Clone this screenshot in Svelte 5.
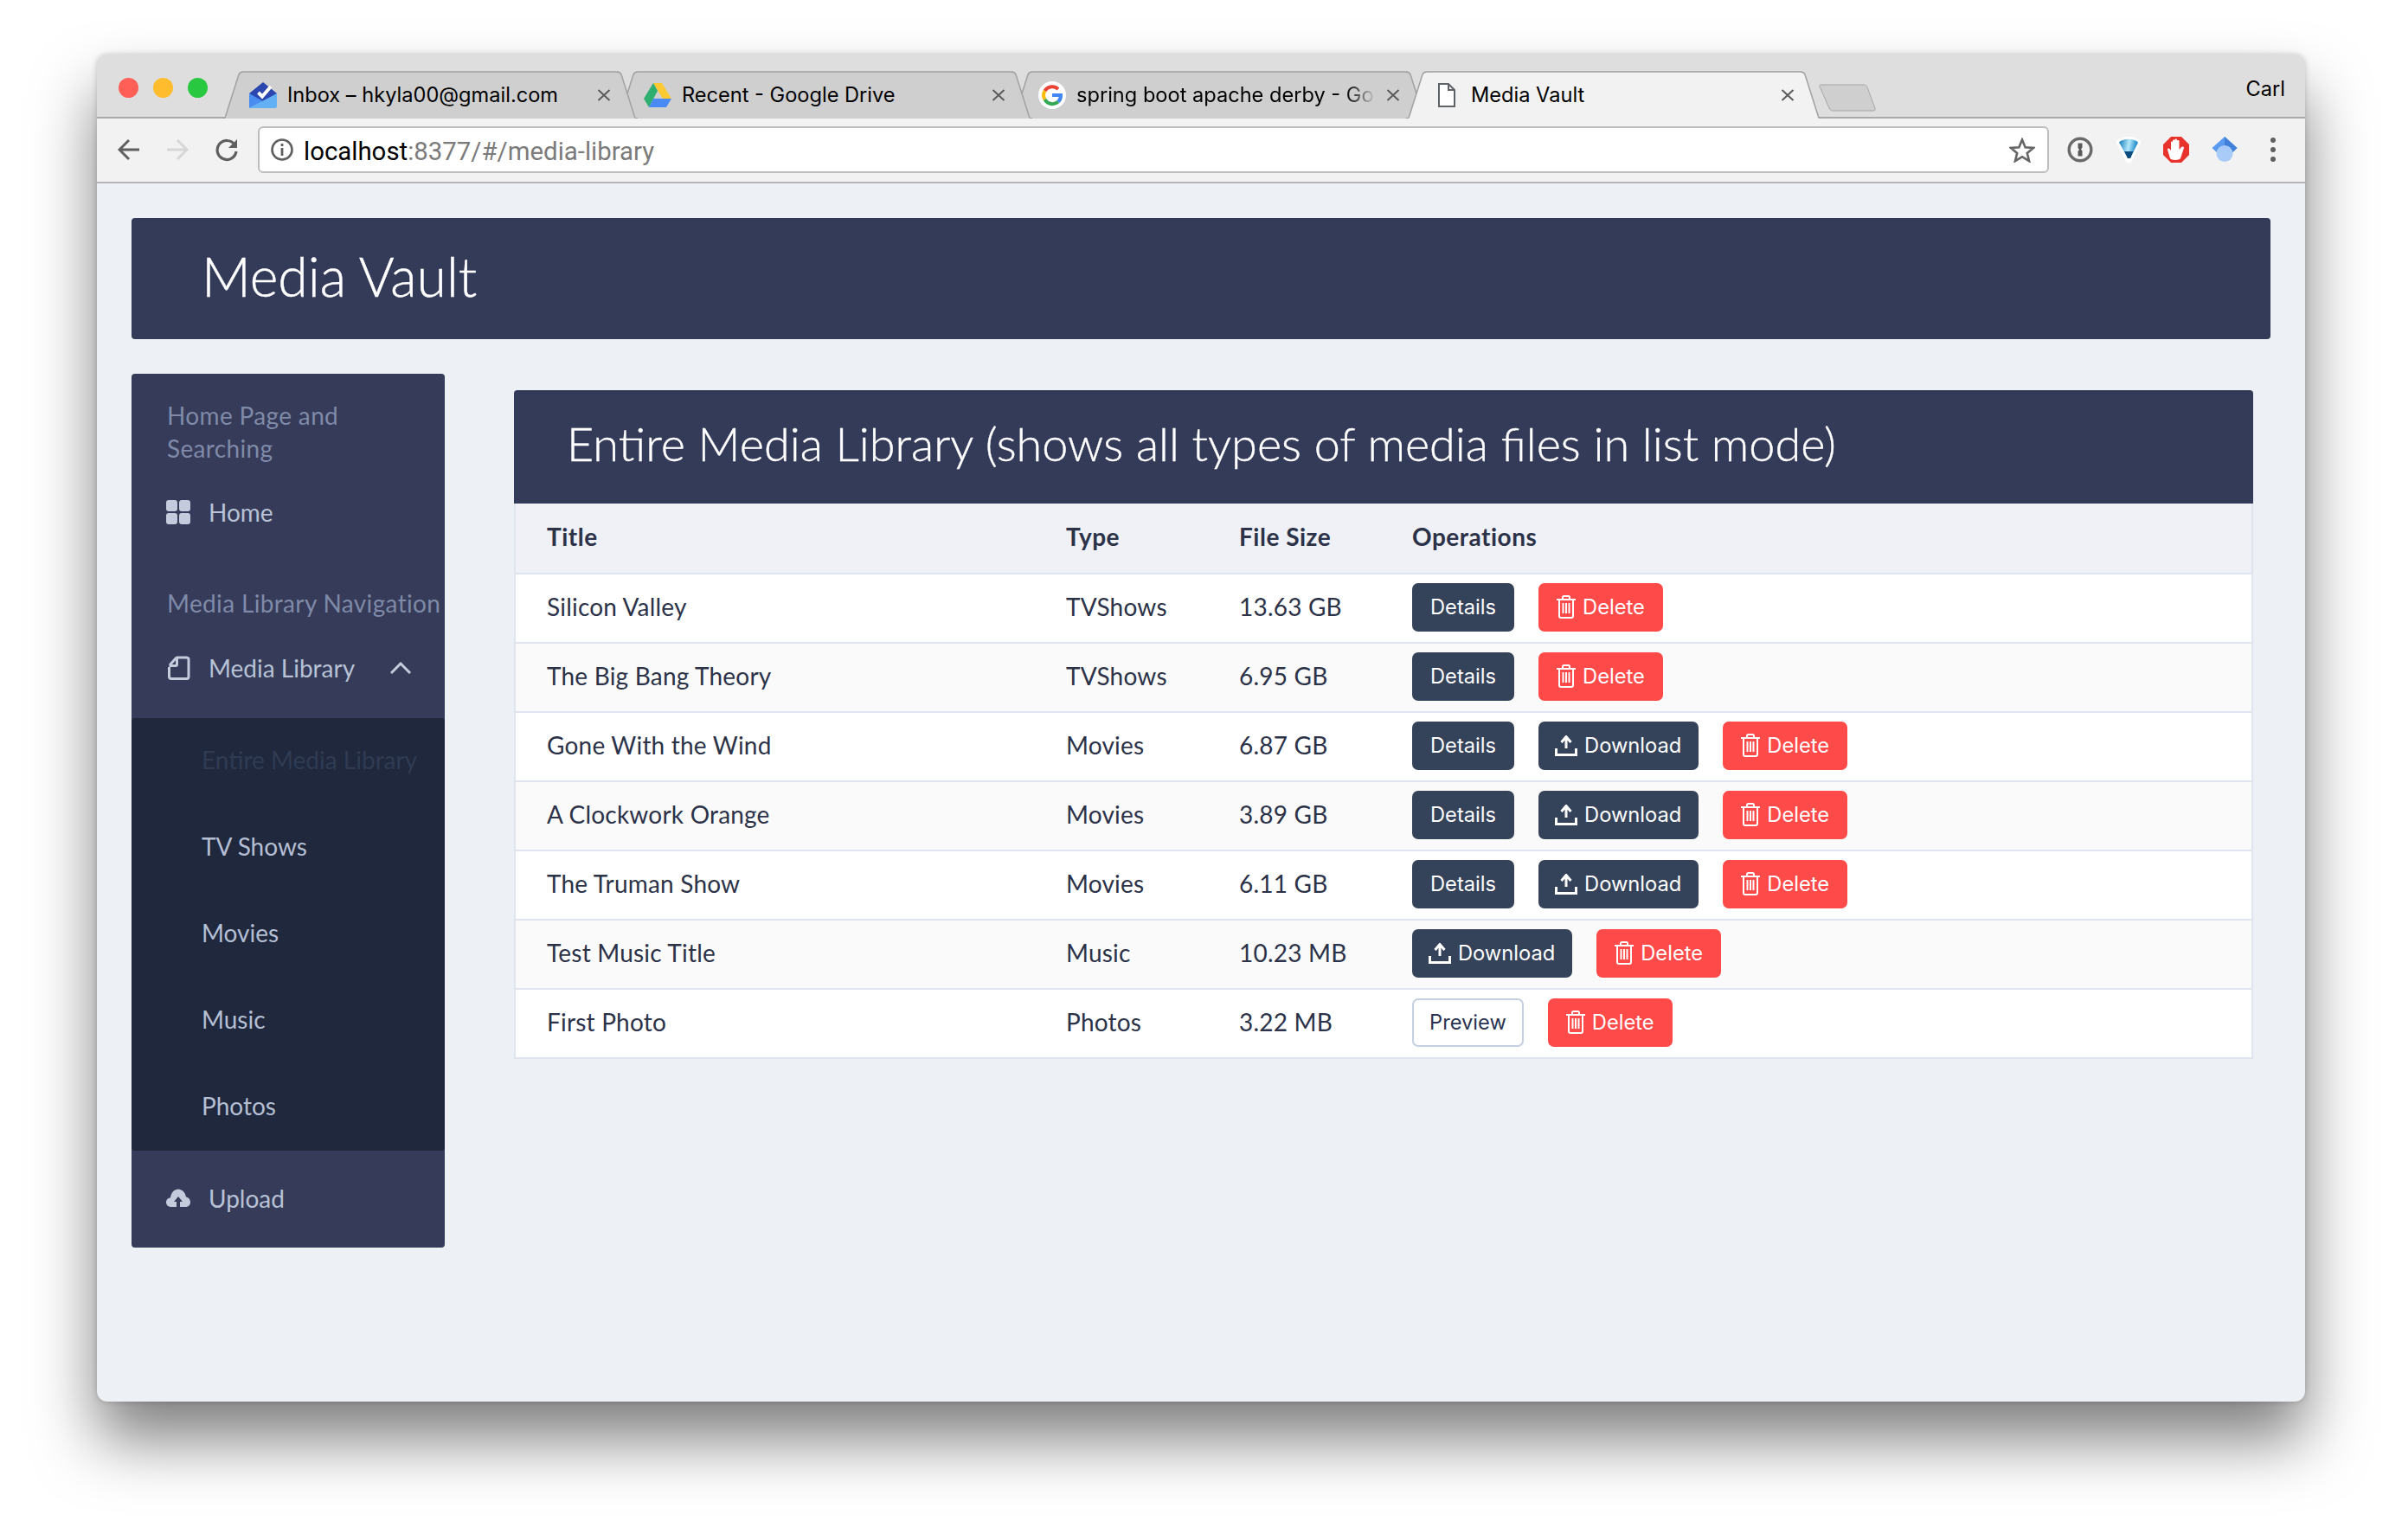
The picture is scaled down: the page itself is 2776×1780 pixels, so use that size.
<script>
  const tabs = [
    { title: 'Inbox – hkyla00@gmail.com', icon: 'inbox' },
    { title: 'Recent - Google Drive', icon: 'drive' },
    { title: 'spring boot apache derby - Go', icon: 'google', fade: true },
    { title: 'Media Vault', icon: 'doc', active: true }
  ];

  const subItems = ['Entire Media Library', 'TV Shows', 'Movies', 'Music', 'Photos'];

  // ops: which buttons each row gets
  const rows = [
    { title: 'Silicon Valley', type: 'TVShows', size: '13.63 GB', ops: ['details', 'delete'] },
    { title: 'The Big Bang Theory', type: 'TVShows', size: '6.95 GB', ops: ['details', 'delete'] },
    { title: 'Gone With the Wind', type: 'Movies', size: '6.87 GB', ops: ['details', 'download', 'delete'] },
    { title: 'A Clockwork Orange', type: 'Movies', size: '3.89 GB', ops: ['details', 'download', 'delete'] },
    { title: 'The Truman Show', type: 'Movies', size: '6.11 GB', ops: ['details', 'download', 'delete'] },
    { title: 'Test Music Title', type: 'Music', size: '10.23 MB', ops: ['download', 'delete'] },
    { title: 'First Photo', type: 'Photos', size: '3.22 MB', ops: ['preview', 'delete'] }
  ];
</script>

<div class="page">
  <div class="window">
    <div class="tabstrip">
      <div class="lights">
        <span class="light red"></span>
        <span class="light amber"></span>
        <span class="light green"></span>
      </div>
      <div class="tabs">
        {#each tabs as tab}
          <div class="tab" class:active={tab.active}>
            <svg class="tab-shape" viewBox="0 0 482 55" preserveAspectRatio="none">
              <path d="M0.5 55 L2 55 C3 55 4 54 4.5 53 L20 4 C21 2 22 1 25 1 L457 1 C460 1 461 2 462 4 L477.5 53 C478 54 479 55 480 55 L481.5 55" />
            </svg>
            <span class="favicon">
              {#if tab.icon === 'inbox'}
                <svg width="32" height="30" viewBox="0 0 32 30">
                  <path d="M0 13 L16 0 L32 13 L16 25 Z" fill="#2c46b0" />
                  <path d="M0 13 L16 22 L0 30 Z" fill="#4a8df0" />
                  <path d="M0 30 L32 13 V28 C32 29 31 30 30 30 Z" fill="#64b0f5" />
                  <path d="M10.5 12 L15 16.5 L25 5" fill="none" stroke="#fff" stroke-width="4" />
                </svg>
              {:else if tab.icon === 'drive'}
                <svg width="32" height="28" viewBox="0 0 32 28">
                  <path d="M11 0 H21 L32 18 H22 Z" fill="#fbc932" />
                  <path d="M11 0 L16 9 L6 28 L0 18 Z" fill="#2eaf6f" />
                  <path d="M11 18 H32 L26 28 H6 Z" fill="#4a8af4" />
                </svg>
              {:else if tab.icon === 'google'}
                <svg width="32" height="32" viewBox="0 0 32 32">
                  <circle cx="16" cy="16" r="16" fill="#fff" />
                  <path d="M23 9 A10 10 0 0 0 7.5 11" fill="none" stroke="#ea4335" stroke-width="4" />
                  <path d="M7.5 11 A10 10 0 0 0 7.5 21" fill="none" stroke="#fbbc05" stroke-width="4" />
                  <path d="M7.5 21 A10 10 0 0 0 23 23.5" fill="none" stroke="#34a853" stroke-width="4" />
                  <path d="M23 23.5 A10 10 0 0 0 26 16 H16" fill="none" stroke="#4285f4" stroke-width="4" />
                </svg>
              {:else}
                <svg width="20" height="28" viewBox="0 0 20 28">
                  <path d="M1 1 H12 L19 8 V27 H1 Z M12 1 V8 H19" fill="#fff" stroke="#5f6368" stroke-width="2" />
                </svg>
              {/if}
            </span>
            <span class="tab-title" class:fade={tab.fade}>{tab.title}</span>
            <svg class="tab-close" width="16" height="14" viewBox="0 0 16 14">
              <path d="M1.5 1 L14.5 13 M14.5 1 L1.5 13" stroke="#5a5a5a" stroke-width="2" />
            </svg>
          </div>
        {/each}
        <svg class="newtab" width="66" height="32" viewBox="0 0 66 32">
          <path d="M2 1 H52 C54 1 55 2 56 4 L65 28 C65.5 30 65 31 63 31 H16 C14 31 13 30 12 28 L1 3 C0.5 2 1 1 2 1 Z" fill="#cfcfcf" stroke="#a6a6a6" />
        </svg>
      </div>
      <span class="profile">Carl</span>
    </div>

    <div class="toolbar">
      <svg class="nav-icon" width="26" height="26" viewBox="0 0 26 26">
        <path d="M25 13 H3 M13 2 L2 13 L13 24" fill="none" stroke="#5f5f5f" stroke-width="3" />
      </svg>
      <svg class="nav-icon" width="26" height="26" viewBox="0 0 26 26">
        <path d="M1 13 H23 M13 2 L24 13 L13 24" fill="none" stroke="#d6d6d6" stroke-width="3" />
      </svg>
      <svg class="nav-icon" width="28" height="28" viewBox="0 0 28 28">
        <path d="M23 8 A11 11 0 1 0 25 16" fill="none" stroke="#5f5f5f" stroke-width="3.2" />
        <path d="M26 2 V12 H16 Z" fill="#5f5f5f" />
      </svg>
      <div class="omnibox">
        <svg width="26" height="26" viewBox="0 0 26 26">
          <circle cx="13" cy="13" r="11.5" fill="none" stroke="#5f5f5f" stroke-width="2.6" />
          <rect x="11.6" y="11" width="2.8" height="9" fill="#5f5f5f" />
          <rect x="11.6" y="6" width="2.8" height="3" fill="#5f5f5f" />
        </svg>
        <span class="url"><span class="host">localhost</span>:8377/#/media-library</span>
        <svg class="star" width="30" height="29" viewBox="0 0 30 29">
          <path d="M15 2.5 L18.6 11.2 L28 11.9 L20.8 18 L23.1 27.2 L15 22.2 L6.9 27.2 L9.2 18 L2 11.9 L11.4 11.2 Z" fill="none" stroke="#666" stroke-width="2.6" />
        </svg>
      </div>
      <div class="extensions">
        <svg width="30" height="30" viewBox="0 0 30 30">
          <circle cx="15" cy="15" r="12.8" fill="#f4f4f4" stroke="#6a6a6a" stroke-width="3.4" />
          <path d="M12.5 7.5 H17.5 V12.5 L16 14.5 L17.5 16.5 V22.5 H12.5 V17 L14 15 L12.5 13 Z" fill="#5a5a5a" />
        </svg>
        <svg width="30" height="32" viewBox="0 0 30 32">
          <defs>
            <linearGradient id="funnel" x1="0" y1="0" x2="1" y2="0.2">
              <stop offset="0" stop-color="#0a76b8" />
              <stop offset="0.55" stop-color="#b5e8fa" />
              <stop offset="1" stop-color="#0a7fc4" />
            </linearGradient>
          </defs>
          <path d="M0.5 7 C6 -1 24 -1 29.5 7 L19 29 C17.5 32 13 32 11.5 29 Z" fill="#fff" />
          <path d="M4 7.5 C9 2.5 21 2.5 26 7.5 L17 26 H14 Z" fill="url(#funnel)" />
          <path d="M10 18 H20.5 L17 26 H14 Z" fill="#0c4a80" />
        </svg>
        <svg width="30" height="30" viewBox="0 0 30 30">
          <path d="M9 0 H21 L30 9 V21 L21 30 H9 L0 21 V9 Z" fill="#e8322c" />
          <path d="M8 25 L5 15 C4.5 13.5 6.5 12.8 7.5 14 L9 16 V6.5 C9 5 11 5 11 6.5 V4.5 C11 3 13.5 3 13.5 4.5 V3.5 C13.5 2 16 2 16 3.5 V5 C16 3.8 18.5 3.8 18.5 5 V15 L21 12 C22 10.8 24.5 11.5 24 13 L20 25 C19 27.5 9 27.5 8 25 Z" fill="#fff" />
        </svg>
        <svg width="30" height="30" viewBox="0 0 30 30">
          <path d="M15 0 L29.5 13 L21 21 H9 L0.5 13 Z" fill="#5a9bf0" />
          <path d="M15 0 L29.5 13 L21 21 L15 15 Z" fill="#4180d8" />
          <circle cx="15" cy="19.5" r="9.5" fill="#a9cbf8" />
        </svg>
        <svg class="dots" width="6" height="28" viewBox="0 0 6 28">
          <circle cx="3" cy="3" r="3" fill="#5f5f5f" />
          <circle cx="3" cy="14" r="3" fill="#5f5f5f" />
          <circle cx="3" cy="25" r="3" fill="#5f5f5f" />
        </svg>
      </div>
    </div>

    <div class="content">
      <header class="app-header">Media Vault</header>

      <div class="columns">
        <nav class="sidebar">
          <div class="nav-label first">Home Page and Searching</div>
          <div class="nav-item home">
            <svg width="28" height="28" viewBox="0 0 28 28">
              <rect width="13" height="13" rx="3" fill="#c3cbdc" />
              <rect x="15" width="13" height="13" rx="3" fill="#c3cbdc" />
              <rect y="15" width="13" height="13" rx="3" fill="#c3cbdc" />
              <rect x="15" y="15" width="13" height="13" rx="3" fill="#c3cbdc" />
            </svg>
            Home
          </div>
          <div class="nav-label second">Media Library Navigation</div>
          <div class="nav-item library">
            <svg width="28" height="28" viewBox="0 0 28 28">
              <path d="M4 11 L11 3 C11.5 2.5 12 2 13 2 H23 C25 2 26 3 26 4 V24 C26 25.5 25 26.5 24 26.5 H6 C4.5 26.5 3.5 25.5 3.5 24 V13 M3.5 11.5 H11 C12 11.5 12.5 11 12.5 10 V2" fill="none" stroke="#c3cbdc" stroke-width="3" />
            </svg>
            Media Library
            <svg class="chevron" width="24" height="14" viewBox="0 0 24 14">
              <path d="M1 13 L12 2 L23 13" fill="none" stroke="#c3cbdc" stroke-width="3" />
            </svg>
          </div>
          <ul class="submenu">
            {#each subItems as item, i}
              <li class:current={i === 0}>{item}</li>
            {/each}
          </ul>
          <div class="nav-item upload">
            <svg width="28" height="22" viewBox="0 0 28 22">
              <path d="M6 21 C2 21 0 18.5 0 15.5 C0 12.5 2.5 10.5 5 10.5 C5.5 4.5 9.5 0.5 14 0.5 C18.5 0.5 22 4 23 9.5 C26 10 28 12.5 28 15.5 C28 18.5 26 21 22.5 21 Z" fill="#c3cbdc" />
              <path d="M14 9 L19 15 H16 V21 H12 V15 H9 Z" fill="#353b58" />
            </svg>
            Upload
          </div>
        </nav>

        <main class="library-panel">
          <h1 class="panel-title">Entire Media Library (shows all types of media files in list mode)</h1>
          <table>
            <colgroup>
              <col class="c-title" />
              <col class="c-type" />
              <col class="c-size" />
              <col />
            </colgroup>
            <thead>
              <tr>
                <th>Title</th>
                <th>Type</th>
                <th>File Size</th>
                <th>Operations</th>
              </tr>
            </thead>
            <tbody>
              {#each rows as row}
                <tr>
                  <td>{row.title}</td>
                  <td>{row.type}</td>
                  <td>{row.size}</td>
                  <td class="ops-cell">
                    <div class="ops">
                      {#each row.ops as op}
                        {#if op === 'details'}
                          <button class="btn dark">Details</button>
                        {:else if op === 'preview'}
                          <button class="btn outline">Preview</button>
                        {:else if op === 'download'}
                          <button class="btn dark download">
                            <svg width="26" height="24" viewBox="0 0 26 24">
                              <path d="M1.5 15 V22.5 H24.5 V15" fill="none" stroke="#fff" stroke-width="3" />
                              <path d="M13 15 V3 M7.5 8 L13 1.5 L18.5 8" fill="none" stroke="#fff" stroke-width="3" />
                            </svg>
                            Download
                          </button>
                        {:else}
                          <button class="btn red-btn">
                            <svg width="22" height="27" viewBox="0 0 22 27">
                              <path d="M0 5 H22 M7 5 V2.5 C7 1.5 7.5 1 8.5 1 H13.5 C14.5 1 15 1.5 15 2.5 V5" fill="none" stroke="#fff" stroke-width="2" />
                              <path d="M3 5 V24 C3 25.2 3.8 26 5 26 H17 C18.2 26 19 25.2 19 24 V5" fill="none" stroke="#fff" stroke-width="2" />
                              <path d="M7.5 9 V21 M11 9 V21 M14.5 9 V21" stroke="#fff" stroke-width="2" />
                            </svg>
                            Delete
                          </button>
                        {/if}
                      {/each}
                    </div>
                  </td>
                </tr>
              {/each}
            </tbody>
          </table>
        </main>
      </div>
    </div>
  </div>
</div>

<style>
  :global(body) {
    margin: 0;
    background: #fff;
  }

  .page {
    height: 1780px;
    box-sizing: border-box;
    padding: 63px 112px 0;
    overflow: hidden;
  }

  .window {
    height: 1557px;
    border-radius: 12px;
    background: #edf0f5;
    display: flex;
    flex-direction: column;
    position: relative;
    box-shadow: 0 44px 72px rgba(0, 0, 0, 0.5), 0 0 6px rgba(0, 0, 0, 0.2);
  }

  /* tab strip */
  .tabstrip {
    height: 74px;
    box-sizing: border-box;
    flex: none;
    display: flex;
    align-items: flex-end;
    background: #dedede;
    border-radius: 12px 12px 0 0;
    border-bottom: 2px solid #a9a9a9;
    position: relative;
  }

  .lights {
    display: flex;
    gap: 17px;
    align-self: flex-start;
    margin: 27px 0 0 25px;
  }

  .light {
    width: 23px;
    height: 23px;
    border-radius: 50%;
  }

  .red { background: #ff5f57; }
  .amber { background: #ffbd2e; }
  .green { background: #28c940; }

  .tabs {
    display: flex;
    margin-left: 16px;
    margin-bottom: -2px;
    flex: 1;
    align-items: flex-end;
  }

  .tab {
    width: 482px;
    height: 55px;
    flex: none;
    box-sizing: border-box;
    margin-right: -26px;
    padding: 0 32px 0 32px;
    display: flex;
    align-items: center;
    position: relative;
    font: 400 23.6px/30px Inter, "Liberation Sans", sans-serif;
    color: #000;
  }

  .tab:nth-child(1) { z-index: 3; }
  .tab:nth-child(2) { z-index: 2; }
  .tab:nth-child(3) { z-index: 1; }
  .tab:nth-child(4) { z-index: 4; }

  .tab-shape {
    position: absolute;
    inset: 0;
    width: 100%;
    height: 100%;
  }

  .tab-shape path {
    fill: #cfcfcf;
    stroke: #a0a0a0;
    stroke-width: 1.5;
    vector-effect: non-scaling-stroke;
  }

  .tab.active .tab-shape path {
    fill: #f2f2f2;
  }

  .favicon {
    position: relative;
    width: 32px;
    height: 32px;
    flex: none;
    display: flex;
    align-items: center;
    justify-content: center;
    margin-right: 12px;
  }

  .tab-title {
    position: relative;
    flex: 1;
    white-space: nowrap;
    overflow: hidden;
  }

  .tab-title.fade {
    -webkit-mask-image: linear-gradient(to right, #000 90%, transparent 100%);
    mask-image: linear-gradient(to right, #000 90%, transparent 100%);
  }

  .tab-close {
    position: relative;
    flex: none;
    margin-left: 12px;
  }

  .newtab {
    flex: none;
    margin: 0 0 8px 22px;
    position: relative;
    z-index: 0;
  }

  .profile {
    position: absolute;
    right: 23px;
    top: 25px;
    font: 400 23.6px/30px Inter, "Liberation Sans", sans-serif;
    color: #000;
  }

  /* toolbar */
  .toolbar {
    height: 75px;
    flex: none;
    box-sizing: border-box;
    background: #f2f2f2;
    border-bottom: 2px solid #b4b4b4;
    display: flex;
    align-items: center;
    padding: 0 0 1px 24px;
  }

  .nav-icon {
    margin-right: 30px;
    flex: none;
  }

  .nav-icon:nth-child(3) {
    margin-right: 22px;
  }

  .omnibox {
    width: 2070px;
    height: 54px;
    box-sizing: border-box;
    flex: none;
    background: #fff;
    border: 2px solid #bdbdbd;
    border-radius: 6px;
    display: flex;
    align-items: center;
    padding: 0 14px 0 13px;
  }

  .url {
    margin-left: 12px;
    padding-top: 3px;
    flex: 1;
    font: 400 29.4px/34px Roboto, "Liberation Sans", sans-serif;
    color: #7b7b7b;
  }

  .host {
    color: #000;
  }

  .extensions {
    display: flex;
    align-items: center;
    gap: 25.5px;
    margin-left: 21px;
  }

  .dots {
    margin-left: 13px;
  }

  /* page content */
  .content {
    flex: 1;
    padding: 40px 40px 0;
  }

  .app-header {
    height: 140px;
    box-sizing: border-box;
    background: #333b59;
    border-radius: 4px;
    padding-left: 81px;
    font: 300 62.5px/134px Lato, sans-serif;
    color: #fff;
    -webkit-text-stroke: 0.5px #fff;
  }

  .columns {
    display: flex;
    align-items: flex-start;
    margin-top: 40px;
    padding-right: 20px;
  }

  .sidebar {
    width: 362px;
    flex: none;
    background: #353b58;
    border-radius: 4px;
    font: 400 28px/38px Lato, sans-serif;
    overflow: hidden;
  }

  .nav-label {
    padding: 0 0 0 41px;
    color: #7f8aa8;
    letter-spacing: 0.35px;
  }

  .nav-label.first {
    margin-top: 29px;
    padding-right: 80px;
  }

  .nav-label.second {
    margin-top: 67px;
    white-space: nowrap;
  }

  .nav-item {
    display: flex;
    align-items: center;
    padding-left: 40px;
    color: #b8c2d6;
    gap: 21px;
  }

  .nav-item.home {
    margin-top: 36px;
  }

  .nav-item.library {
    margin-top: 37px;
  }

  .chevron {
    margin-left: 20px;
  }

  .submenu {
    list-style: none;
    margin: 39px 0 0;
    padding: 0;
    background: #20283d;
    border-radius: 4px;
  }

  .submenu li {
    height: 100px;
    box-sizing: border-box;
    padding: 29px 0 0 81px;
    color: #b4bfd4;
  }

  .submenu li.current {
    color: #2f3b52;
  }

  .nav-item.upload {
    height: 112px;
    padding-bottom: 3px;
    box-sizing: border-box;
  }

  .library-panel {
    flex: 1;
    margin: 19px 0 0 80px;
  }

  .panel-title {
    margin: 0;
    height: 131px;
    box-sizing: border-box;
    background: #333b59;
    border-radius: 4px 4px 0 0;
    padding-left: 61px;
    font: 300 54px/124px Lato, sans-serif;
    color: #fff;
    -webkit-text-stroke: 0.4px #fff;
    white-space: nowrap;
  }

  table {
    width: 100%;
    border-collapse: separate;
    border-spacing: 0;
    table-layout: fixed;
    border: solid #e0e4ee;
    border-width: 0 2px;
    font: 400 28px/34px Lato, sans-serif;
    letter-spacing: 0.2px;
    color: #2c3248;
  }

  .c-title { width: 636px; }
  .c-type { width: 200px; }
  .c-size { width: 200px; }

  th,
  td {
    padding: 0 0 5px 36px;
    text-align: left;
    border-bottom: 2px solid #e0e4ee;
    height: 80px;
    box-sizing: border-box;
  }

  th {
    height: 82px;
    font-weight: 700;
    letter-spacing: 0.5px;
    background: #eff1f6;
  }

  th + th,
  td + td {
    padding-left: 0;
  }

  td.ops-cell {
    padding-bottom: 3px;
  }

  tbody tr {
    background: #fff;
  }

  tbody tr:nth-child(even) {
    background: #fafafa;
  }

  .ops {
    display: flex;
    align-items: center;
    gap: 28px;
  }

  .btn {
    height: 56px;
    box-sizing: border-box;
    border: none;
    border-radius: 7px;
    padding: 0 21px;
    display: flex;
    align-items: center;
    gap: 8px;
    font: 400 23.7px/30px Inter, sans-serif;
    letter-spacing: 0;
    color: #fff;
  }

  .btn.dark {
    background: #34425a;
  }

  .btn.download {
    padding: 0 20px 0 19px;
  }

  .btn.red-btn {
    background: #ff4a4a;
  }

  .btn.outline {
    background: #fff;
    border: 2px solid #c5cfe0;
    color: #2a3350;
    padding: 0 18px;
  }
</style>
